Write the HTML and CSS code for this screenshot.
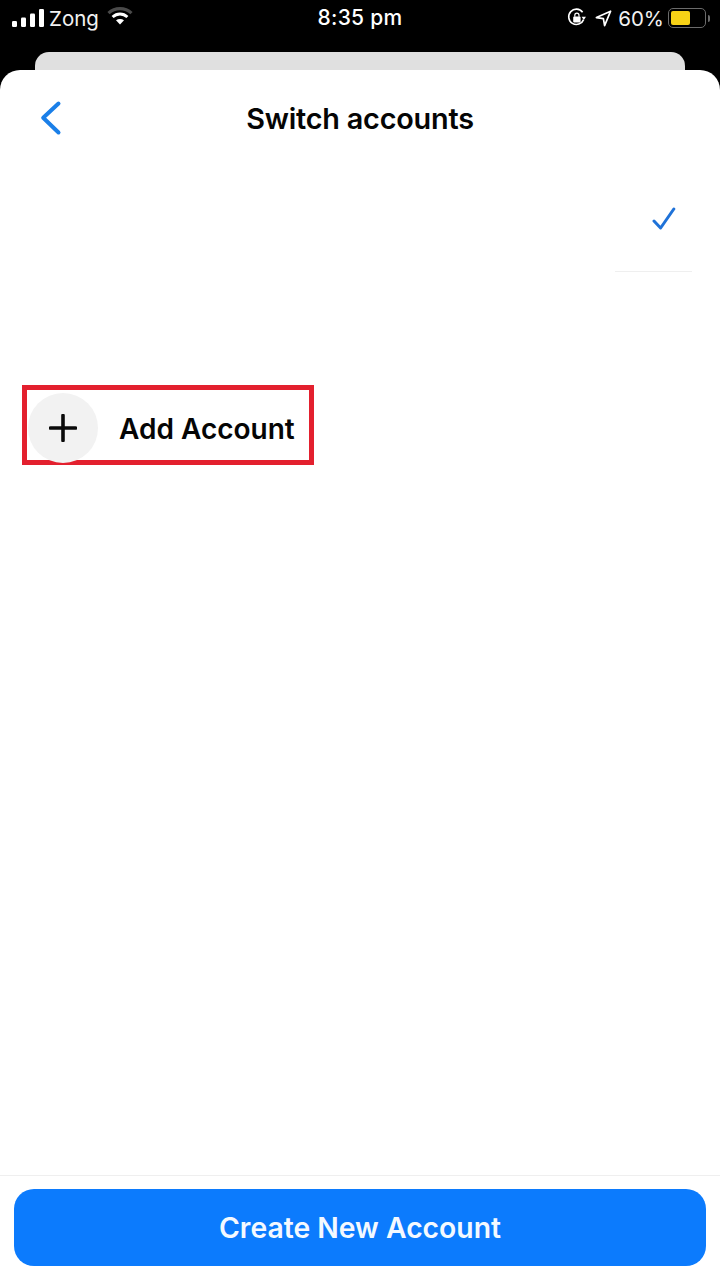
FILE: index.html
```html
<!DOCTYPE html>
<html lang="en">
<head>
<meta charset="utf-8">
<title>Switch accounts</title>
<link rel="stylesheet" href="styles.css">
</head>
<body>
<div class="phone">
  <div class="status">
    <div class="status-left">
      <svg class="signal" width="32" height="18" viewBox="0 0 32 18"><rect x="0" y="12" width="5" height="6" rx="1.2"/><rect x="9" y="8.5" width="5" height="9.5" rx="1.2"/><rect x="18" y="4.5" width="5" height="13.5" rx="1.2"/><rect x="27" y="0" width="5" height="18" rx="1.2"/></svg>
      <span class="carrier">Zong</span>
      <svg class="wifi" width="26" height="19" viewBox="0 0 26 19" fill="none"><path d="M1.5 7.2C8 1 18 1 24.5 7.2" stroke="#4a4a4a" stroke-width="3.2"/><path d="M5.6 11C10 7 16 7 20.4 11" stroke="#fff" stroke-width="3"/><path d="M9 14.3C11.4 12.4 14.6 12.4 17 14.3L13 18.4Z" fill="#fff"/></svg>
    </div>
    <div class="time">8:35 pm</div>
    <div class="status-right">
      <svg width="20" height="20" viewBox="0 0 20 20" fill="none"><path d="M16.6 11.6A7.7 7.7 0 1 1 15.6 4.2" stroke="#fff" stroke-width="1.6"/><path d="M14.6 8.8H19L16.8 12Z" fill="#fff"/><rect x="6.2" y="8.6" width="7.4" height="6" rx="1" fill="#fff"/><path d="M7.8 8.8V7.2A2.1 2.1 0 0 1 12 7.2V8.8" stroke="#fff" stroke-width="1.2"/></svg>
      <svg class="arrow" width="17" height="17" viewBox="0 0 17 17" fill="none"><path d="M15.6 1.2L1.4 7.6L8.4 8.6L9.6 15.6Z" stroke="#fff" stroke-width="1.7" stroke-linejoin="round"/></svg>
      <span class="pct">60%</span>
      <div class="battery"><div class="battery-shell"><div class="battery-fill"></div></div><div class="battery-cap"></div></div>
    </div>
  </div>
  <div class="back-sheet"></div>
  <div class="sheet">
    <header class="sheet-head">
      <svg class="back" width="22" height="36" viewBox="0 0 22 36" fill="none"><path d="M18.5 3.5L3.2 17.8L18.5 32.5" stroke="#1a7fe8" stroke-width="4" stroke-linecap="round" stroke-linejoin="round"/></svg>
      <h1 class="title">Switch accounts</h1>
    </header>
    <div class="current">
      <div class="current-cell">
        <svg class="check" width="24" height="24" viewBox="0 0 24 24" fill="none"><path d="M2 14L8.6 21L21.8 2" stroke="#1f72d8" stroke-width="3" stroke-linecap="round" stroke-linejoin="round"/></svg>
      </div>
    </div>
    <div class="add-wrap">
      <div class="add-box">
        <div class="add-circle">
          <svg width="28" height="28" viewBox="0 0 28 28" fill="none"><path d="M14 1.5V26.5M1.5 14H26.5" stroke="#0a0a0a" stroke-width="3.6" stroke-linecap="round"/></svg>
        </div>
        <span class="add-label">Add Account</span>
      </div>
    </div>
    <footer class="sheet-foot">
      <div class="create-btn">Create New Account</div>
    </footer>
  </div>
</div>
</body>
</html>
```
FILE: styles.css
```css
* { box-sizing: border-box; }
html, body { margin: 0; padding: 0; }
body { background: #000; font-family: Inter, "Liberation Sans", sans-serif; }
.phone { width: 720px; height: 1280px; background: #000; display: flex; flex-direction: column; overflow: hidden; }
.status { height: 52px; flex: none; display: grid; grid-template-columns: 1fr auto 1fr; align-items: start; padding: 0 10px; color: #fff; }
.status-left { display: flex; align-items: center; height: 36px; padding-left: 2px; }
.signal { fill: #fff; margin-top: -1px; }
.carrier { font-size: 20.5px; margin-left: 5px; color: #f2f2f2; }
.wifi { margin-left: 8px; margin-top: -6px; }
.time { font-size: 21px; font-weight: 500; line-height: 36px; letter-spacing: 0.3px; }
.status-right { display: flex; align-items: center; justify-content: flex-end; height: 36px; }
.arrow { margin-left: 8px; }
.pct { font-size: 20.5px; margin-left: 6px; color: #f2f2f2; }
.battery { display: flex; align-items: center; margin-left: 4px; }
.battery-shell { width: 38px; height: 20px; border: 1.5px solid #6b6b6b; border-radius: 5px; padding: 2px; }
.battery-fill { width: 60%; height: 100%; background: #f7d216; border-radius: 2px; }
.battery-cap { width: 2px; height: 7px; margin-left: 2px; background: #6b6b6b; border-radius: 0 2px 2px 0; }
.back-sheet { height: 18px; flex: none; margin: 0 35px; background: #e0e0e0; border-radius: 14px 14px 0 0; }
.sheet { flex: 1; background: #fff; border-radius: 20px 20px 0 0; display: flex; flex-direction: column; }
.sheet-head { height: 96px; flex: none; position: relative; display: flex; align-items: center; justify-content: center; }
.back { position: absolute; left: 40px; top: 30px; }
.title { margin: 0; font-size: 28.8px; font-weight: 600; color: #050505; letter-spacing: -0.2px; }
.current { height: 106px; flex: none; display: flex; justify-content: flex-end; padding-right: 28px; }
.current-cell { width: 77px; height: 100%; border-bottom: 1px solid #efefef; display: flex; justify-content: flex-end; padding-top: 41px; padding-right: 16px; }
.check { flex: none; }
.add-wrap { flex: 1; padding: 113px 0 0 22px; }
.add-box { width: 292px; height: 80px; border: 5px solid #e3202e; display: flex; align-items: flex-start; padding: 3px 0 0 1px; }
.add-circle { width: 70px; height: 70px; border-radius: 50%; background: #f2f2f2; display: flex; align-items: center; justify-content: center; flex: none; }
.add-label { font-size: 28px; font-weight: 600; color: #050505; margin-left: 21px; line-height: 72px; white-space: nowrap; }
.sheet-foot { height: 105px; flex: none; border-top: 1px solid #efefef; padding: 13px 14px 0; }
.create-btn { height: 77px; background: #0c7bfd; border-radius: 20px; color: #f4f9ff; font-size: 28.3px; font-weight: 600; display: flex; align-items: center; justify-content: center; }
```
